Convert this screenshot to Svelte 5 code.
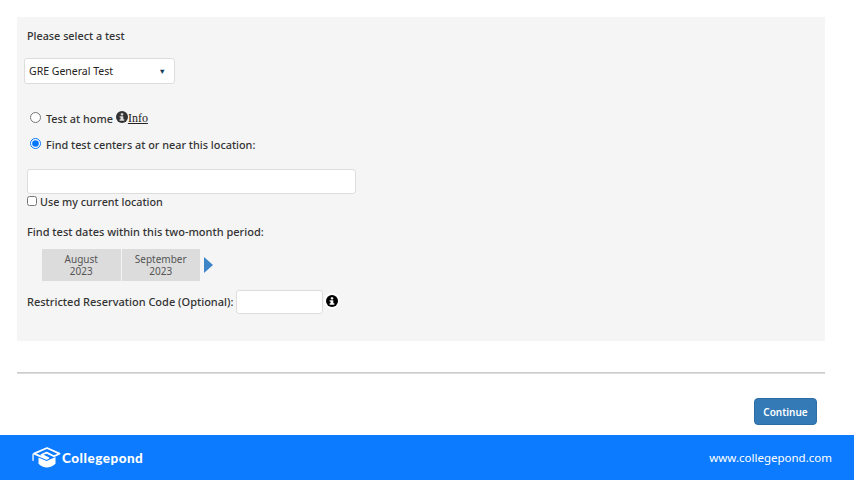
<script lang="ts">
  const months = [
    { name: "August", year: 2023 },
    { name: "September", year: 2023 },
  ];
  let mode = $state("center");
</script>

<div class="page">
  <section class="panel">
    <p class="heading first-heading">Please select a test</p>

    <div class="select">
      <span>GRE General Test</span>
      <span class="caret">▼</span>
    </div>

    <div class="mode first">
      <input type="radio" name="mode" value="home" bind:group={mode} />
      <span class="mode-label">Test at home</span>
      <svg class="info" viewBox="0 0 12 12" aria-hidden="true">
        <circle cx="6" cy="6" r="6" fill="#333" />
        <rect x="4.7" y="2.2" width="2.6" height="2.2" rx="0.8" fill="#ddd" />
        <path d="M3.6 5.2h3.7v3.1h1v1.4H3.6V8.3h1V6.6h-1z" fill="#ddd" />
      </svg>
      <a class="info-link" href="#info">Info</a>
    </div>

    <div class="mode second">
      <input type="radio" name="mode" value="center" bind:group={mode} />
      <span class="mode-label">Find test centers at or near this location:</span>
    </div>

    <input class="location" type="text" />

    <label class="current">
      <input type="checkbox" />
      <span>Use my current location</span>
    </label>

    <p class="heading dates">Find test dates within this two-month period:</p>

    <div class="months">
      {#each months as m}
        <div class="month">
          <span>{m.name}</span>
          <span>{m.year}</span>
        </div>
      {/each}
      <svg class="next" viewBox="0 0 9 16" aria-hidden="true">
        <path d="M0 0l9 8-9 8z" fill="#3d85c6" />
      </svg>
    </div>

    <div class="code">
      <span class="code-label">Restricted Reservation Code (Optional):</span>
      <input class="code-input" type="text" />
      <span class="code-info">
        <svg viewBox="0 0 12 12" aria-hidden="true">
          <circle cx="6" cy="6" r="6" fill="#000" />
          <rect x="4.7" y="2.2" width="2.6" height="2.2" rx="0.8" fill="#fff" />
          <path d="M3.6 5.2h3.7v3.1h1v1.4H3.6V8.3h1V6.6h-1z" fill="#fff" />
        </svg>
      </span>
    </div>
  </section>

  <hr class="divider" />

  <div class="actions">
    <button class="continue">Continue</button>
  </div>

  <footer class="footer">
    <div class="brand">
      <svg class="logo" viewBox="0 0 29 21" aria-hidden="true">
        <path d="M2 6.6L15 1l12.5 5.6L22 9.2 14.6 5.6 9.6 7.8 16.4 11 14.6 11.9z" fill="none" stroke="#fff" stroke-width="1.8" stroke-linejoin="round" />
        <path d="M6.5 10.4l8.1 3.7 8.9-4.1v6.8c-2.2 2.4-5.9 3.8-8.7 3.8S8.5 19.2 6.5 16.8z" fill="#fff" />
        <rect x="0.4" y="6.8" width="1.3" height="7" fill="#fff" />
      </svg>
      <span class="brand-name">Collegepond</span>
    </div>
    <span class="url">www.collegepond.com</span>
  </footer>
</div>

<style>
  :global(body) {
    margin: 0;
    background: #fff;
  }

  .page {
    width: 854px;
    height: 480px;
    padding-top: 17px;
    box-sizing: border-box;
    display: flex;
    flex-direction: column;
    font-family: "Noto Sans", "Open Sans", sans-serif;
    color: #333;
    overflow: hidden;
  }

  .panel {
    width: 807.5px;
    height: 325px;
    margin-left: 17px;
    padding: 11px 10px 0;
    box-sizing: border-box;
    background: #f5f5f5;
    font-size: 11px;
  }

  .heading {
    margin: 0;
    line-height: 16px;
    font-size: 11px;
    font-weight: 500;
    color: #333;
  }

  .first-heading {
    font-size: 10.8px;
  }

  .select {
    display: flex;
    align-items: center;
    justify-content: space-between;
    width: 151px;
    height: 26px;
    margin: 14px 0 0 -3px;
    padding: 0 8px 0 4px;
    box-sizing: border-box;
    background: #fff;
    border: 1px solid #ddd;
    border-radius: 3px;
    font-size: 10.5px;
    color: #222;
  }

  .caret {
    font-size: 7.5px;
    color: #0f3d57;
  }

  .mode {
    display: flex;
    align-items: center;
    height: 16px;
    margin-left: 3px;
  }

  .mode.first {
    margin-top: 26px;
  }

  .mode.second {
    margin-top: 10px;
  }

  .mode input {
    width: 11px;
    height: 11px;
    margin: 0 5px 2px 0;
    accent-color: #0075ff;
  }

  .mode-label {
    font-size: 10.85px;
    font-weight: 500;
    color: #333;
  }

  .info {
    width: 12px;
    height: 12px;
    margin: 0 0 3px 3px;
  }

  .info-link {
    font-family: "Liberation Serif", serif;
    font-size: 12px;
    color: #222;
  }

  .location {
    display: block;
    width: 329px;
    height: 25px;
    margin: 17px 0 0;
    padding: 0;
    box-sizing: border-box;
    background: #fff;
    border: 1px solid #ddd;
    border-radius: 3px;
  }

  .current {
    display: flex;
    align-items: center;
    height: 16px;
    font-size: 10.75px;
    font-weight: 500;
  }

  .current input {
    width: 10px;
    height: 10px;
    margin: 0 3px 2px 0;
  }

  .dates {
    margin-top: 14px;
  }

  .months {
    display: flex;
    align-items: center;
    gap: 1px;
    margin: 9px 0 0 15px;
  }

  .month {
    width: 78.5px;
    height: 32px;
    display: flex;
    flex-direction: column;
    align-items: center;
    justify-content: center;
    background: #dcdcdc;
    font-size: 10px;
    line-height: 12.5px;
    color: #555;
  }

  .next {
    width: 9px;
    height: 16px;
    margin-left: 3px;
  }

  .code {
    display: flex;
    align-items: center;
    margin-top: 9px;
  }

  .code-label {
    margin-bottom: 2px;
    font-size: 11px;
    font-weight: 500;
    color: #333;
  }

  .code-input {
    width: 87px;
    height: 24px;
    margin-left: 3px;
    padding: 0;
    box-sizing: border-box;
    background: #fff;
    border: 1px solid #ddd;
    border-radius: 3px;
  }

  .code-info {
    display: flex;
    align-items: center;
    justify-content: center;
    width: 16px;
    height: 16px;
    margin: 0 0 2px 1px;
    background: #fff;
    border-radius: 50%;
  }

  .code-info svg {
    width: 12px;
    height: 12px;
  }

  .divider {
    width: 807.5px;
    margin: 31px 0 0 17px;
    border: none;
    border-top: 1px solid #ccc;
    border-bottom: 1px solid #ddd;
  }

  .actions {
    display: flex;
    justify-content: flex-end;
    padding-right: 37px;
    margin-top: 24px;
  }

  .continue {
    width: 63px;
    height: 27px;
    padding: 0;
    background: #337ab7;
    border: 1px solid #2e6da4;
    border-radius: 4px;
    color: #fff;
    font-family: inherit;
    font-size: 10px;
    font-weight: 600;
  }

  .footer {
    display: flex;
    align-items: center;
    justify-content: space-between;
    height: 45px;
    margin-top: 10px;
    padding: 0 22px 0 32px;
    background: #0d7bff;
    color: #fff;
  }

  .brand {
    display: flex;
    align-items: center;
    gap: 1px;
  }

  .logo {
    width: 29px;
    height: 21px;
  }

  .brand-name {
    font-family: "Lato", sans-serif;
    font-size: 13.5px;
    font-weight: 900;
    letter-spacing: 0.5px;
  }

  .url {
    font-size: 11.5px;
  }
</style>
